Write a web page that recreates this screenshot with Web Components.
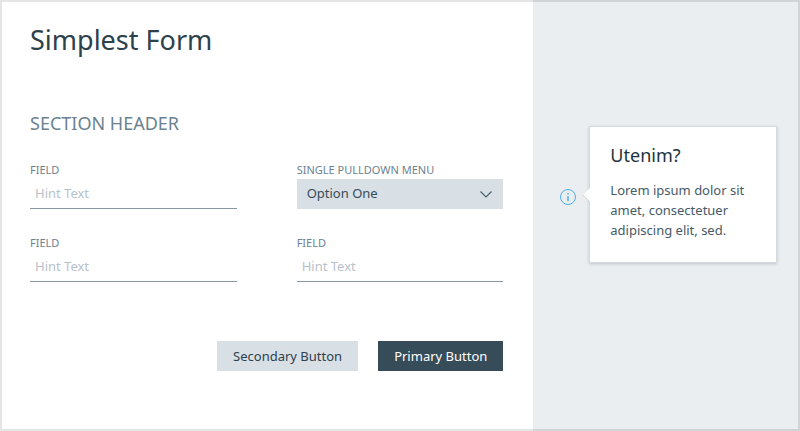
<!DOCTYPE html>
<html lang="en">
<head>
<meta charset="utf-8">
<title>Simplest Form</title>
<style>
  :root {
    --ink: #2d414d;
    --muted: #6c8290;
    --line: #8497a3;
    --hint: #b8c2ca;
    --fill: #d8dfe5;
    --panel: #eaeef1;
    --strong: #374c59;
    --info: #4fb0e6;
  }
  body {
    margin: 0;
    font-family: "Noto Sans", "Open Sans", sans-serif;
    font-size: 13px;
    line-height: 20px;
    color: var(--ink);
    background: #fff;
  }
</style>
</head>
<body>
<form-page>
  <form-section heading="Section Header">
    <text-field label="Field" hint="Hint Text"></text-field>
    <select-field label="Single Pulldown Menu" options="Option One,Option Two,Option Three"></select-field>
    <text-field label="Field" hint="Hint Text"></text-field>
    <text-field label="Field" hint="Hint Text"></text-field>
  </form-section>
  <action-button slot="actions">Secondary Button</action-button>
  <action-button slot="actions" primary>Primary Button</action-button>
  <info-callout slot="aside">
    <span slot="title">Utenim?</span>
    Lorem ipsum dolor sit amet, consectetuer adipiscing elit, sed.
  </info-callout>
</form-page>

<script>
  class BaseElement extends HTMLElement {
    connectedCallback() {
      if (this.shadowRoot) return;
      this.attachShadow({ mode: 'open' }).innerHTML =
        '<style>*{box-sizing:border-box}</style>' + this.render();
    }
  }

  customElements.define('form-page', class extends BaseElement {
    render() {
      return `<style>
        :host { display: grid; grid-template-columns: 2fr 1fr; min-height: 100vh; position: relative; }
        :host::after { content: ""; position: absolute; inset: 0; border: 2px solid rgba(0,0,0,.1); pointer-events: none; }
        main { padding: 20px 30px; }
        h1 { margin: 0 0 51px; font-size: 27px; line-height: 40px; font-weight: 400; }
        footer { display: flex; justify-content: flex-end; gap: 20px; margin-top: 59px; }
        aside { background: var(--panel); padding: 126px 23px 20px 27px; }
      </style>
      <main>
        <h1>Simplest Form</h1>
        <slot></slot>
        <footer><slot name="actions"></slot></footer>
      </main>
      <aside><slot name="aside"></slot></aside>`;
    }
  });

  customElements.define('form-section', class extends BaseElement {
    render() {
      return `<style>
        :host { display: block; }
        h2 { margin: 0 0 27px; font-size: 18px; line-height: 24px; font-weight: 400; color: var(--muted); text-transform: uppercase; }
        div { display: grid; grid-template-columns: 1fr 1fr; gap: 26px 60px; }
      </style>
      <h2>${this.getAttribute('heading')}</h2>
      <div><slot></slot></div>`;
    }
  });

  const fieldStyles = `
    :host { display: block; min-width: 0; }
    label { display: block; font-size: 11px; line-height: 16px; color: var(--muted); text-transform: uppercase; white-space: nowrap; }
    input, select { display: block; width: 100%; height: 30px; margin: 0; border: 0; border-radius: 0; font: inherit; color: var(--strong); }
    :focus-visible { outline: 2px solid var(--info); }`;

  customElements.define('text-field', class extends BaseElement {
    render() {
      return `<style>${fieldStyles}
        input { height: 31px; padding: 0 5px 1px; border-bottom: 1px solid var(--line); background: transparent; }
        input::placeholder { color: var(--hint); opacity: 1; }
      </style>
      <label for="control">${this.getAttribute('label')}</label>
      <input id="control" type="text" placeholder="${this.getAttribute('hint')}">`;
    }
  });

  customElements.define('select-field', class extends BaseElement {
    render() {
      const options = this.getAttribute('options').split(',').map(o => `<option>${o}</option>`).join('');
      return `<style>${fieldStyles}
        .box { display: grid; align-items: center; margin-top: 1px; }
        select, svg { grid-area: 1 / 1; }
        select { appearance: none; padding: 0 30px 2px 10px; background: var(--fill); }
        svg { justify-self: end; margin-right: 11px; pointer-events: none; }
      </style>
      <label for="control">${this.getAttribute('label')}</label>
      <div class="box">
        <select id="control">${options}</select>
        <svg width="12" height="8" viewBox="0 0 12 8" fill="none" stroke="#4b606d" stroke-width="1.2"><path d="M.5 1.500 6 7 11.5 1.500"/></svg>
      </div>`;
    }
  });

  customElements.define('action-button', class extends BaseElement {
    render() {
      return `<style>
        :host { display: block; }
        button { display: block; height: 30px; margin: 0; padding: 0 16px; border: 0; font: inherit; color: var(--ink); background: var(--fill); cursor: pointer; }
        :host([primary]) button { color: #fff; background: var(--strong); }
      </style>
      <button type="button"><slot></slot></button>`;
    }
  });

  customElements.define('info-callout', class extends BaseElement {
    render() {
      return `<style>
        :host { display: flex; align-items: center; gap: 13px; color: #465a67; }
        button { flex: none; display: block; margin: 0; padding: 4px 0 0; border: 0; background: none; line-height: 0; cursor: pointer; }
        section { flex: 1; min-width: 0; position: relative; padding: 16px 20px 22px; background: #fff; border: 1px solid #d3dbe1; box-shadow: 0 1px 3px rgba(55,76,89,.25); }
        .arrow { position: absolute; right: 100%; top: 50%; margin-top: -7px; }
        h3 { margin: 0 0 13px; font-size: 18px; line-height: 24px; font-weight: 400; color: #22333d; }
      </style>
      <button type="button" aria-label="More information">
        <svg width="16" height="16" viewBox="0 0 16 16" fill="none" stroke="#4fb0e6"><circle cx="8" cy="8" r="7.5"/><path d="M8 7v5M8 4v1.500" stroke-width="1.500"/></svg>
      </button>
      <section>
        <svg class="arrow" width="8" height="14" viewBox="0 0 8 14"><path d="M8 0 1 7l7 7z" fill="#fff"/><path d="M1 7l7 7" stroke="#cdd5db" fill="none"/></svg>
        <h3><slot name="title"></slot></h3>
        <slot></slot>
      </section>`;
    }
  });
</script>
</body>
</html>
